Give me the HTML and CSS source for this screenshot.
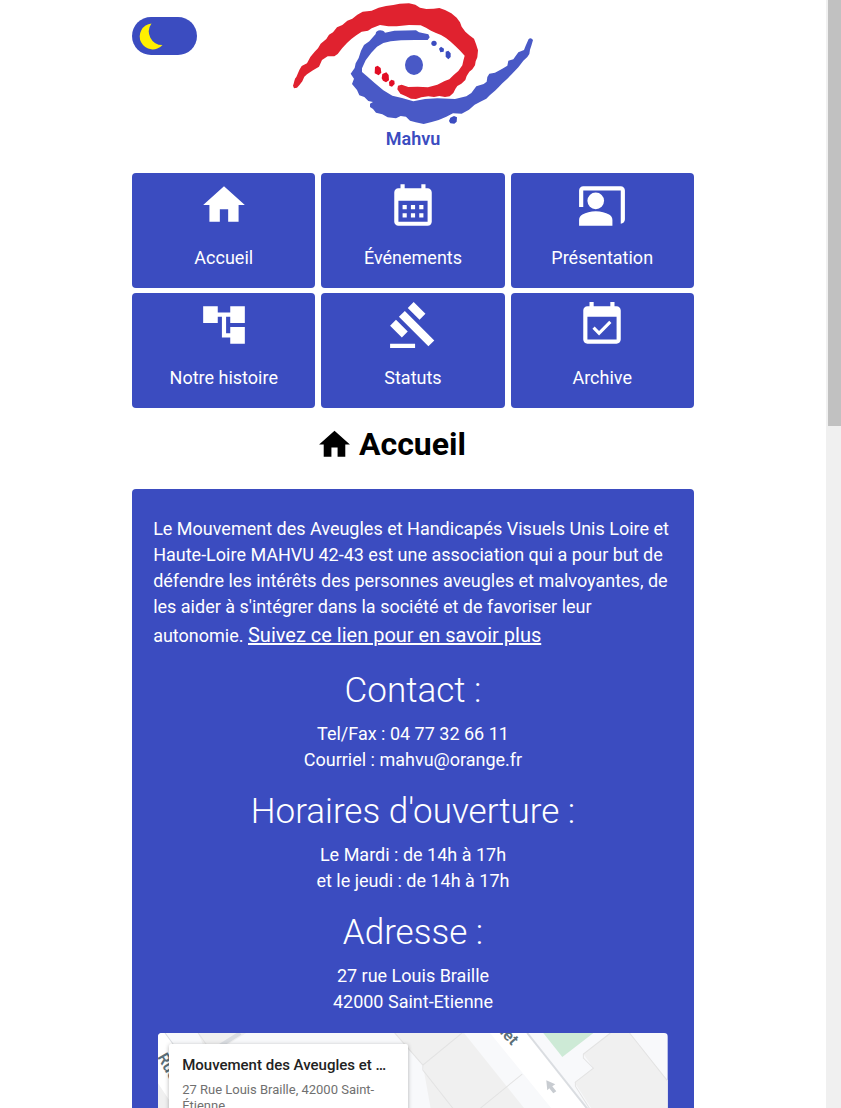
FILE: index.html
```html
<!DOCTYPE html>
<html lang="fr">
<head>
<meta charset="utf-8">
<meta name="viewport" content="width=device-width, initial-scale=1">
<title>Mahvu - Accueil</title>
<link rel="stylesheet" href="styles.css">
</head>
<body>
<div class="shell">
  <div class="page">
   <div class="column">
    <header class="header">
      <label class="theme">
        <input class="theme-input" type="checkbox" role="switch" aria-label="Thème sombre">
        <svg class="theme-moon" viewBox="0 0 24 27" aria-hidden="true"><path d="M12.500 .5A13 13 0 1 0 23.500 22A13.500 13.500 0 0 1 12.500 .5Z"/></svg>
      </label>
      <a class="brand" href="#">
        <svg class="logo" viewBox="0 0 765 381" aria-hidden="true">
          <path class="red" d="M24 257C28 247 28 236 34 231L43 210L50 198L66 190L76 171L89 155L99 145L107 131L124 117L132 104L144 97L156 82L172 75L187 62L202 56L217 44L233 35L260 32L281 23L303 18L325 15L344 11L372 10L391 14L405 23L424 27L446 26L463 24L480 30L499 40L515 53L525 67L530 80L541 95L553 106L567 116L573 132L579 151L577 172L572 184L570 196L562 208L553 215L545 228L541 240L529 251L517 258L511 267L505 279L494 289L480 291L463 288L447 291L430 289L409 292L393 297L378 296L363 289L346 281L337 268L339 257L350 254L370 261L398 260L429 262L457 254L479 243L493 238L506 225L520 213L532 196L535 182L539 167L524 151L510 137L497 125L483 114L468 105L453 99L438 92L423 83L407 76L372 75L335 79L310 79L285 75L260 85L249 92L230 95L214 106L199 117L186 129L172 144L158 162L148 169L128 169L111 180L102 200L84 211L66 223L58 230L52 244L44 254L36 263L27 265Z"/>
          <path class="blue" d="M272 102C272 88 294 88 300 98L328 92L393 91L402 97L430 103L434 112L428 120L390 120L348 121L317 124L295 129L276 140L259 158L242 181L231 205L231 216L246 229L269 249L295 271L322 287L351 294L385 304L420 297L457 295L510 297L544 289L559 279L574 259L596 252L605 245L607 231L613 221L630 218L652 206L667 197L670 182L685 178L700 157L717 150L722 137L731 117Q738 111 744 120L739 137L735 149L733 162L727 171L715 182L700 202L690 212L680 223L667 236L652 250L642 260L630 272L615 285L604 296L589 304L569 314L552 329L530 341L504 340L484 350L461 360L440 366L416 372L392 367L375 362L363 350L347 348L333 355L308 352L292 343L273 338L264 327L255 321L255 311L264 306L250 303L238 291L223 286L216 270L201 252L207 236L197 221L209 204L212 190L221 174L228 152L237 135L253 124Z"/>
          <ellipse class="blue" cx="387" cy="195" rx="27" ry="30"/>
          <circle class="blue-dark" cx="447" cy="130" r="8"/>
          <path class="blue-dark" d="M462 146L468 140L477 146L476 155L466 157ZM482 155L490 152L497 160L497 171L490 178L482 170ZM496 353L507 348L516 352L515 365L508 371L496 370L492 363Z"/>
          <path class="crimson" d="M270 201L278 197L287 204L289 218L281 226L269 220ZM292 222L304 217L311 225L312 241L303 247L294 242L290 235ZM312 246L319 239L328 242L329 252L321 260L313 257Z"/>
        </svg>
        <span class="brand-name">Mahvu</span>
      </a>
    </header>

    <nav class="menu">
      <a class="tile" href="#">
        <svg class="tile-icon" viewBox="0 0 24 24" aria-hidden="true"><path d="M10 20v-6h4v6h5v-8h3L12 3 2 12h3v8z"/></svg>
        <span>Accueil</span>
      </a>
      <a class="tile" href="#">
        <svg class="tile-icon" viewBox="0 0 24 24" aria-hidden="true"><path d="M19 4h-1V2h-2v2H8V2H6v2H5c-1.110 0-1.990.9-1.990 2L3 20a2 2 0 0 0 2 2h14c1.100 0 2-.9 2-2V6c0-1.100-.9-2-2-2zm0 16H5V10h14v10zM9 14H7v-2h2v2zm4 0h-2v-2h2v2zm4 0h-2v-2h2v2zm-8 4H7v-2h2v2zm4 0h-2v-2h2v2zm4 0h-2v-2h2v2z"/></svg>
        <span>Événements</span>
      </a>
      <a class="tile" href="#">
        <svg class="tile-icon" viewBox="0 0 24 24" aria-hidden="true"><path d="M21 3H3C1.900 3 1 3.900 1 5v8h2V5h18v16c1.100 0 2-.9 2-2V5C23 3.900 22.100 3 21 3z"/><circle cx="9" cy="10" r="4"/><path d="M15.390 16.560C13.710 15.700 11.530 15 9 15s-4.710.7-6.390 1.560C1.610 17.070 1 18.100 1 19.220V22h16v-2.780c0-1.120-.61-2.150-1.610-2.660z"/></svg>
        <span>Présentation</span>
      </a>
      <a class="tile" href="#">
        <svg class="tile-icon" viewBox="0 0 24 24" aria-hidden="true"><path d="M22 11V3h-7v3H9V3H2v8h7V8h2v10h4v3h7v-8h-7v3h-2V8h2v3z"/></svg>
        <span>Notre histoire</span>
      </a>
      <a class="tile" href="#">
        <svg class="tile-icon" viewBox="0 0 24 24" aria-hidden="true"><path d="M1 21h12v2H1zM5.245 8.070l2.830-2.827 14.140 14.142-2.828 2.828zM12.317 1l5.657 5.656-2.830 2.830-5.654-5.660zM3.825 9.485l5.657 5.657-2.828 2.828-5.657-5.657z"/></svg>
        <span>Statuts</span>
      </a>
      <a class="tile" href="#">
        <svg class="tile-icon" viewBox="0 0 24 24" aria-hidden="true"><path d="M16.530 11.060L15.470 10l-4.880 4.880-2.120-2.120-1.060 1.060L10.590 17zM19 3h-1V1h-2v2H8V1H6v2H5c-1.110 0-1.990.9-1.990 2L3 19c0 1.100.89 2 2 2h14c1.100 0 2-.9 2-2V5c0-1.100-.9-2-2-2zm0 16H5V8h14v11z"/></svg>
        <span>Archive</span>
      </a>
    </nav>

    <h1 class="title">
      <svg class="title-icon" viewBox="0 0 24 24" aria-hidden="true"><path d="M10 20v-6h4v6h5v-8h3L12 3 2 12h3v8z"/></svg>
      <span>Accueil</span>
    </h1>

    <main class="panel">
      <p class="intro">Le Mouvement des Aveugles et Handicapés Visuels Unis Loire et Haute-Loire MAHVU 42-43 est une association qui a pour but de défendre les intérêts des personnes aveugles et malvoyantes, de les aider à s'intégrer dans la société et de favoriser leur autonomie. <a class="more" href="#">Suivez ce lien pour en savoir plus</a></p>
      <section class="info">
        <h2 class="info-title">Contact :</h2>
        <p class="info-text">Tel/Fax : 04 77 32 66 11<br>Courriel : mahvu@orange.fr</p>
      </section>
      <section class="info">
        <h2 class="info-title">Horaires d'ouverture :</h2>
        <p class="info-text">Le Mardi : de 14h à 17h<br>et le jeudi : de 14h à 17h</p>
      </section>
      <section class="info">
        <h2 class="info-title">Adresse :</h2>
        <p class="info-text">27 rue Louis Braille<br>42000 Saint-Etienne</p>
      </section>
      <div class="map">
        <svg class="map-drawing" viewBox="0 0 508 400" preserveAspectRatio="xMidYMin slice" aria-hidden="true">
          <rect class="ground" width="508" height="400"/>
          <path class="road" d="M0 0H7L80 100V400H0Z"/>
          <path class="edge" d="M7 0L80 100"/>
          <path class="block" d="M40 0H88L50 24ZM235 0H305L393 110L430 400H330L264 32Z"/>
          <path class="block" d="M0 50L60 140V400H0Z"/>
          <path class="line" d="M40 0L60 28M236 0L264 32M303 0L264 32V37L297 79M363 41L320 76"/>
          <path class="road-grey" d="M60 14L82 0"/>
          <path class="road" d="M331 0H367L560 240V400H540L445 140Z"/>
          <path class="edge wide" d="M368 0L560 242"/>
          <path class="block" d="M450 0H470L508 47V140H474L415 49L434 35L424 21Z"/>
          <path class="line" d="M451 0L424 21V25L434 35L416 49V53L430 75M470 0L508 48"/>
          <path class="park" d="M384 0H434L403 24Z"/>
          <path class="arrow" d="M387 47L396 51L393 53L397 58L394 60L390 55L388 57Z"/>
          <text class="street" transform="translate(337 -4) rotate(48)">uet</text>
          <text class="street" transform="translate(-1 24) rotate(60)">Rue</text>
        </svg>
        <div class="place">
          <div class="place-name">Mouvement des Aveugles et Handicapés Visuels</div>
          <div class="place-address">27 Rue Louis Braille, 42000 Saint-Étienne</div>
        </div>
      </div>
    </main>
   </div>
  </div>
  <div class="scrollbar" aria-hidden="true"><div class="thumb"></div></div>
</div>
</body>
</html>
```

FILE: styles.css
```css
* { box-sizing: border-box; }
body {
  margin: 0;
  background: #fff;
  color: #000;
  font: 18px/26px Roboto, "Liberation Sans", sans-serif;
}
h1, h2, p { margin: 0; }
.shell { display: flex; height: 100vh; overflow: hidden; }
.page { flex: 1; min-width: 0; }
.column { width: 68%; margin: 0 auto; }

.header { display: grid; grid-template-columns: 1fr auto 1fr; }
.theme {
  display: flex;
  align-items: center;
  width: 65px;
  height: 38px;
  margin-top: 17px;
  padding-left: 7px;
  border-radius: 19px;
  background: #3b4cc0;
  cursor: pointer;
}
.theme-input { appearance: none; width: 0; height: 0; margin: 0; }
.theme-moon { width: 24px; height: 27px; fill: #fff000; }
.brand { text-align: center; text-decoration: none; color: #3b4cc0; }
.logo { display: block; width: 255px; height: 127px; }
.brand-name { display: block; font-weight: 600; line-height: 24px; }
.red { fill: #e0222f; }
.crimson { fill: #e20d24; }
.blue { fill: #4959c6; }
.blue-dark { fill: #3b4cc0; }

.menu {
  display: grid;
  grid-template-columns: repeat(3, 1fr);
  gap: 5px 6px;
  margin-top: 22px;
}
.tile {
  display: flex;
  flex-direction: column;
  align-items: center;
  gap: 15px;
  height: 115px;
  padding-top: 7px;
  border-radius: 4px;
  background: #3b4cc0;
  color: #fff;
  text-decoration: none;
}
.tile-icon { width: 50px; height: 50px; fill: currentColor; }

.title {
  display: flex;
  justify-content: center;
  align-items: center;
  gap: 6px;
  margin: 16px 44px 25px 0;
  font-size: 32px;
  line-height: 40px;
}
.title-icon { width: 37px; height: 37px; }

.panel { padding: 27px 26px; border-radius: 4px; background: #3b4cc0; color: #fff; }
.intro { margin: 0 -5px 20px; }
.more { color: #fff; font-size: 20px; line-height: 30px; }
.info { margin-bottom: 18px; text-align: center; }
.info-title { margin-bottom: 9px; font-size: 35px; line-height: 42px; font-weight: 300; }

.map { position: relative; height: 400px; border-radius: 4px; overflow: hidden; }
.map-drawing { display: block; width: 100%; height: 100%; }
.ground { fill: #f8f9fb; }
.block { fill: #f0f0f0; }
.road { fill: #fff; }
.park { fill: #cdead6; }
.arrow { fill: #c8ccd1; }
.edge, .line, .road-grey { fill: none; stroke: #dadde1; }
.line { stroke: #e3e3e3; }
.wide { stroke-width: 2; }
.road-grey { stroke-width: 4; }
.street { fill: #5b6f78; font-size: 16px; font-weight: 600; }
.place {
  position: absolute;
  top: 11px;
  left: 11px;
  width: 239px;
  padding: 12px 13px;
  border-radius: 2px;
  background: #fff;
  box-shadow: 0 1px 4px rgba(0, 0, 0, 0.3);
}
.place-name {
  overflow: hidden;
  color: #222;
  font-size: 15px;
  font-weight: 500;
  line-height: 18px;
  text-overflow: ellipsis;
  white-space: nowrap;
}
.place-address { margin-top: 8px; color: #707070; font-size: 13px; line-height: 16px; }

.scrollbar { width: 15px; padding-left: 2px; background: #f0f0f0; }
.thumb { height: 426px; background: #c1c1c1; }
```
